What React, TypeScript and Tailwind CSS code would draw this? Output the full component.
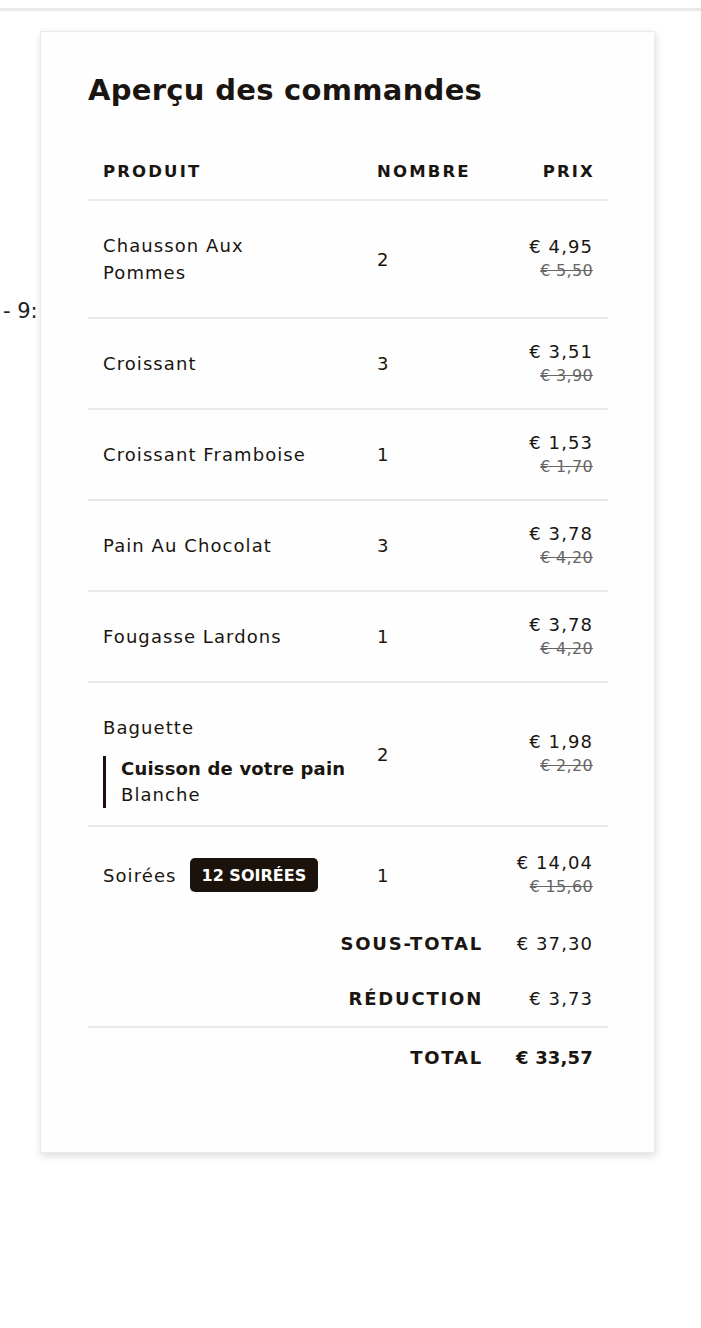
import React from 'react'

type Item = {
  name: string
  qty: number
  price: string
  old: string
  option?: { label: string; value: string }
  badge?: string
}

const ITEMS: Item[] = [
  { name: 'Chausson Aux Pommes', qty: 2, price: '€ 4,95', old: '€ 5,50' },
  { name: 'Croissant', qty: 3, price: '€ 3,51', old: '€ 3,90' },
  { name: 'Croissant Framboise', qty: 1, price: '€ 1,53', old: '€ 1,70' },
  { name: 'Pain Au Chocolat', qty: 3, price: '€ 3,78', old: '€ 4,20' },
  { name: 'Fougasse Lardons', qty: 1, price: '€ 3,78', old: '€ 4,20' },
  {
    name: 'Baguette',
    qty: 2,
    price: '€ 1,98',
    old: '€ 2,20',
    option: { label: 'Cuisson de votre pain', value: 'Blanche' },
  },
  { name: 'Soirées', qty: 1, price: '€ 14,04', old: '€ 15,60', badge: '12 SOIRÉES' },
]

const COLS = 'grid grid-cols-[274px_136px_110px] items-center'

function Row({ item, last }: { item: Item; last: boolean }) {
  return (
    <div className={`${COLS} ${last ? '' : 'border-b-2 border-[#e9e9e9]'}`}>
      <div className={`pl-[15px] pt-[31px] ${item.option ? 'pb-[17px]' : 'pb-[31px]'}`}>
        {item.badge ? (
          <div className="flex items-center leading-[27px]">
            <span>{item.name}</span>
            <span className="ml-[13px] inline-flex h-[34px] items-center rounded-[5px] bg-[#1b130b] px-[12px] text-[16px] font-bold tracking-normal text-white">
              {item.badge}
            </span>
          </div>
        ) : (
          <div className="max-w-[218px] leading-[27px]">{item.name}</div>
        )}
        {item.option && (
          <div className="mt-[15px] border-l-[3px] border-[#1b130b] pl-[15px] leading-[26px]">
            <div className="font-bold tracking-[0.01em]">{item.option.label}</div>
            <div>{item.option.value}</div>
          </div>
        )}
      </div>
      <div className="pl-[15px] leading-[27px]">{item.qty}</div>
      <div className="flex flex-col items-end pr-[15px]">
        <span className="leading-[24px]">{item.price}</span>
        <span className="text-[16px] leading-[24px] tracking-[0.02em] text-[#666] line-through">{item.old}</span>
      </div>
    </div>
  )
}

function Summary({ label, value, strong }: { label: string; value: string; strong?: boolean }) {
  return (
    <div className="grid grid-cols-[410px_110px] items-center leading-[27px]">
      <span className="pr-[15px] text-right text-[18px] font-bold uppercase tracking-[0.1em]">{label}</span>
      <span className={`pr-[15px] text-right ${strong ? 'font-bold tracking-[0.01em]' : ''}`}>{value}</span>
    </div>
  )
}

export default function App() {
  return (
    <div className="relative min-h-[1328px] overflow-hidden bg-white font-['DejaVu_Sans',sans-serif] text-[18px] tracking-[0.06em] text-[#1a1510]">
      <div className="h-[11px] border-b-[3px] border-[#e9e9e9]" />
      <span className="absolute left-[3px] top-[296px] text-[21px] tracking-normal text-[#222]">- 9:</span>
      <div className="relative z-10 ml-[40px] mt-[20px] h-[1122px] w-[615px] border border-[#ebebeb] bg-[#fefefe] pl-[47px] pr-[46px] pt-[40px] shadow-[1px_3px_8px_rgba(0,0,0,0.14)]">
        <h1 className="text-[29px] font-bold leading-[36px] tracking-[0.01em]">Aperçu des commandes</h1>

        <div className={`${COLS} mt-[52px] border-b-2 border-[#e9e9e9] pb-[15px] text-[16.5px] font-bold uppercase leading-[24px] tracking-[0.13em]`}>
          <span className="pl-[15px]">Produit</span>
          <span className="pl-[15px]">Nombre</span>
          <span className="pr-[13px] text-right">Prix</span>
        </div>

        {ITEMS.map((item, i) => (
          <Row key={item.name} item={item} last={i === ITEMS.length - 1} />
        ))}

        <div className="pt-[7px]">
          <Summary label="Sous-total" value="€ 37,30" />
          <div className="mt-[28px]">
            <Summary label="Réduction" value="€ 3,73" />
          </div>
        </div>
        <div className="mt-[14px] border-t-2 border-[#e9e9e9] pt-[16px]">
          <Summary label="Total" value="€ 33,57" strong />
        </div>
      </div>
    </div>
  )
}
